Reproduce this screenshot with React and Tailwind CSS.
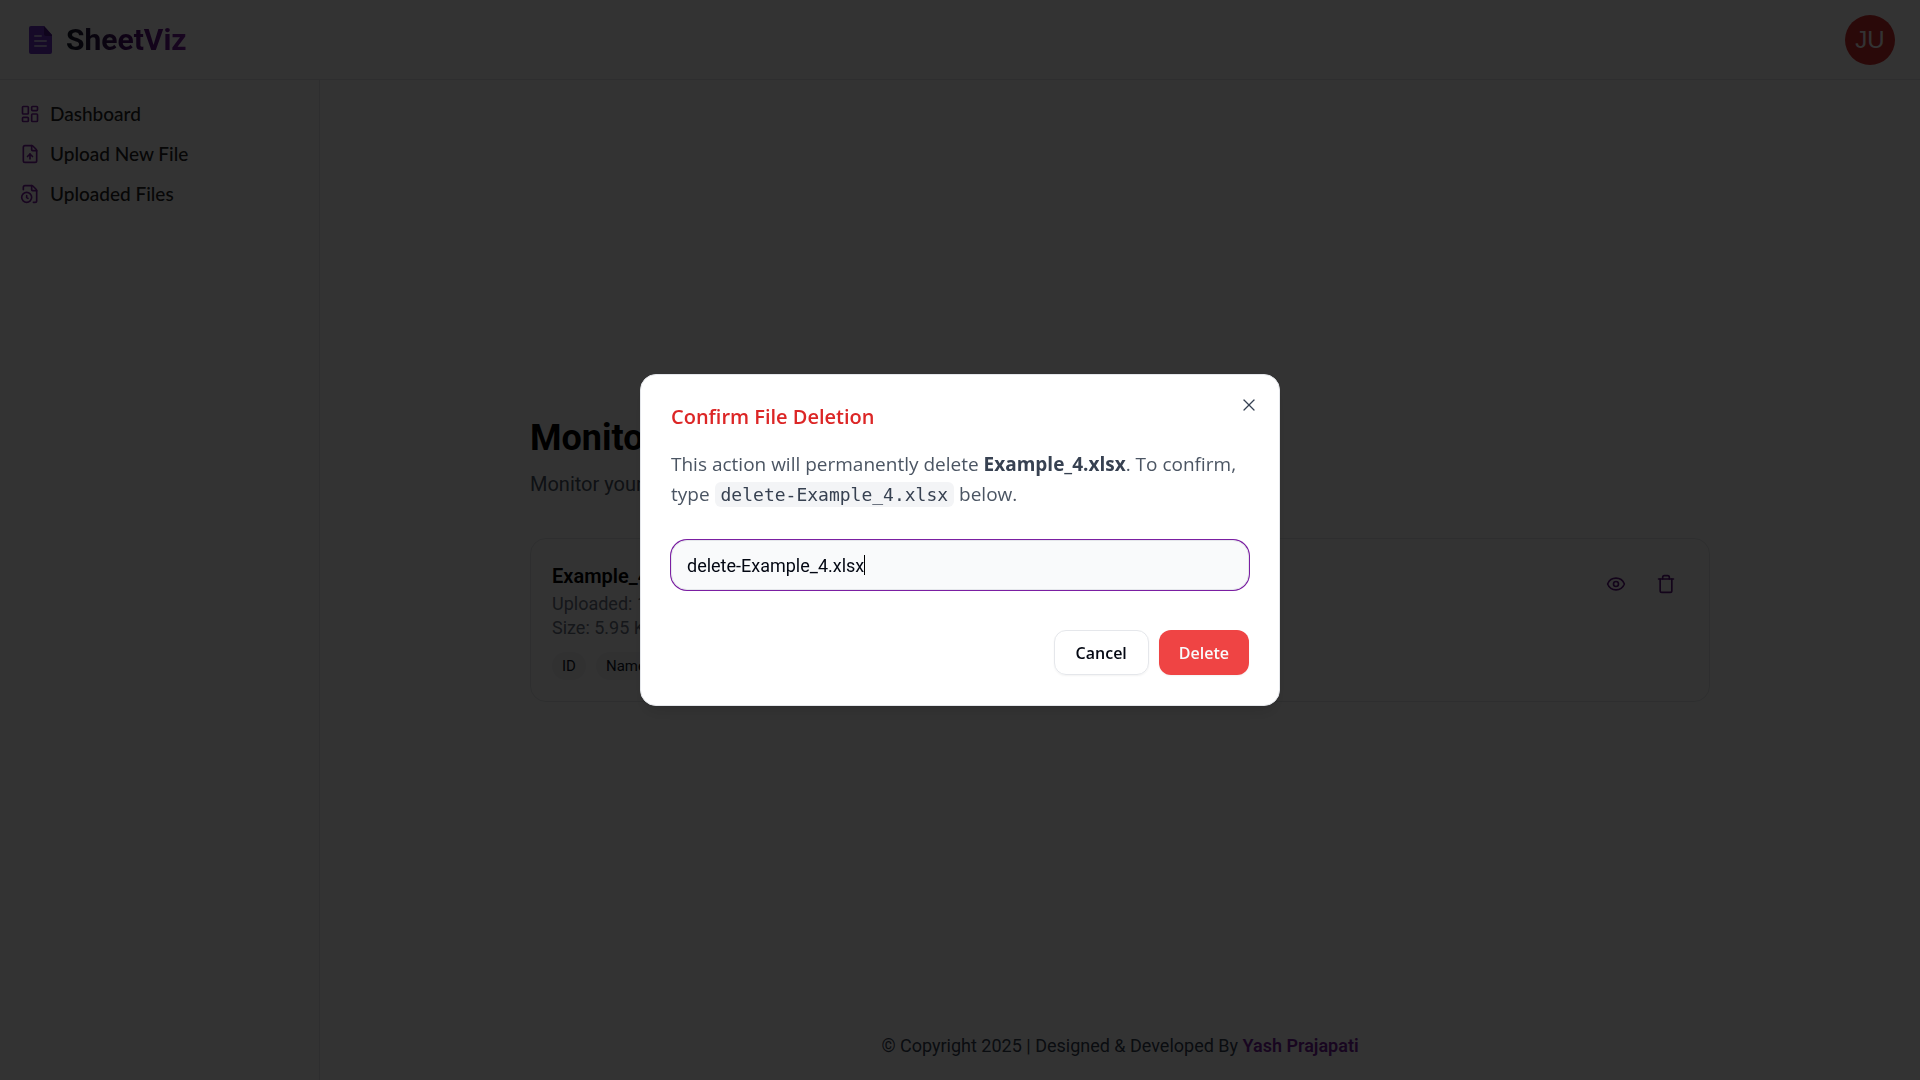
import { useState } from "react";
import { Eye, FileClock, FileUp, LayoutDashboard, Trash, X } from "lucide-react";

const navItems = [
  { label: "Dashboard", Icon: LayoutDashboard },
  { label: "Upload New File", Icon: FileUp },
  { label: "Uploaded Files", Icon: FileClock },
];

function Logo() {
  return (
    <svg viewBox="0 0 24 28" className="h-7 w-6" aria-hidden="true">
      <path d="M3 0H16L24 9V26A2 2 0 0 1 22 28H3A2 2 0 0 1 1 26V2A2 2 0 0 1 3 0Z" fill="#6d35c8" />
      <path d="M16 0L24 9V10H18A2 2 0 0 1 16 8Z" fill="#4a148c" />
      <path d="M7 10h6M7 15h11M7 20h11" stroke="#c4b5e8" strokeWidth="2" strokeLinecap="round" />
    </svg>
  );
}

function Header() {
  return (
    <header className="flex h-20 items-center justify-between border-b border-gray-200 pr-[25px] pl-7">
      <a href="#" className="flex items-center gap-3.5">
        <Logo />
        <span className="bg-linear-to-r from-gray-900 via-[#4a0a6b] to-[#7b1fa2] bg-clip-text text-3xl font-bold text-transparent">
          SheetViz
        </span>
      </a>
      <button className="size-[50px] rounded-full bg-[#d32f2f] font-['Liberation_Sans',sans-serif] text-2xl text-white">
        JU
      </button>
    </header>
  );
}

function Sidebar() {
  return (
    <nav className="w-80 shrink-0 border-r border-gray-200 px-5 pt-3.5 font-['Lato',sans-serif]">
      {navItems.map(({ label, Icon }) => (
        <a key={label} href="#" className="flex h-10 items-center gap-2.5 text-[19px] font-medium text-neutral-800">
          <Icon size={20} className="text-[#7b1fa2]" />
          {label}
        </a>
      ))}
    </nav>
  );
}

function FileCard() {
  return (
    <article className="mt-10 flex items-start justify-between rounded-2xl border border-gray-200 p-[21px]">
      <div>
        <h2 className="text-xl leading-8 font-semibold text-black">Example_4.xlsx</h2>
        <p className="text-lg leading-6 text-gray-500">Uploaded: 1 day ago</p>
        <p className="text-lg leading-6 text-gray-500">Size: 5.95 KB</p>
        <ul className="mt-3 flex gap-2.5 text-[15px] leading-5 text-gray-900">
          <li className="rounded-full bg-gray-100 px-2.5 py-1">ID</li>
          <li className="rounded-full bg-gray-100 px-2.5 py-1">Name</li>
        </ul>
      </div>
      <div className="flex gap-1.5 text-[#5e1480]">
        <button aria-label="View file" className="px-3 py-3.5"><Eye size={20} /></button>
        <button aria-label="Delete file" className="px-3 py-3.5"><Trash size={20} /></button>
      </div>
    </article>
  );
}

function DeleteDialog() {
  const [value, setValue] = useState("delete-Example_4.xlsx");
  return (
    <div className="fixed inset-0 flex items-center justify-center bg-black/80">
      <section
        role="dialog"
        aria-modal="true"
        aria-labelledby="dialog-title"
        className="relative w-full max-w-[640px] rounded-2xl border border-gray-200 bg-white p-[30px] font-['Open_Sans',sans-serif] shadow-lg"
      >
        <button aria-label="Close" className="absolute top-5 right-5 text-gray-700">
          <X size={20} strokeWidth={1.5} />
        </button>
        <h2 id="dialog-title" className="text-xl leading-6 font-semibold text-[#dc2626]">Confirm File Deletion</h2>
        <p className="mt-5 text-[19px] leading-[30px] text-[#4b5563]">
          This action will permanently delete <strong className="text-[#374151]">Example_4.xlsx</strong>. To confirm,
          <br />
          type{" "}
          <code className="rounded-md bg-gray-100 px-1.5 py-0.5 font-['DejaVu_Sans_Mono',monospace] text-lg text-[#374151]">
            delete-Example_4.xlsx
          </code>{" "}
          below.
        </p>
        <div className="relative mt-[31px]">
          <input
            aria-label="Type the confirmation text"
            value={value}
            onChange={(e) => setValue(e.target.value)}
            className="block h-[50px] w-full rounded-2xl border border-gray-200 bg-[#f9fafb] px-[15px] font-['Roboto',sans-serif] text-lg text-gray-950 ring-1 ring-[#7b1fa2] outline-none"
          />
          <span className="absolute top-[15px] left-[193px] h-5 w-px bg-black" aria-hidden="true" />
        </div>
        <div className="mt-10 flex justify-end gap-2.5 text-base font-semibold">
          <button className="h-[45px] rounded-xl border border-gray-200 px-[21px] text-gray-950 shadow-xs">Cancel</button>
          <button className="h-[45px] rounded-xl bg-[#ef4444] px-5 text-gray-50 shadow-xs">Delete</button>
        </div>
      </section>
    </div>
  );
}

export default function App() {
  return (
    <div className="flex min-h-screen flex-col bg-white font-['Roboto',sans-serif]">
      <Header />
      <div className="flex flex-1">
        <Sidebar />
        <div className="flex flex-1 flex-col">
          <main className="mx-auto flex w-full max-w-[1180px] flex-1 flex-col justify-center pt-7">
            <h1 className="text-4xl font-bold text-black">Monitor Files</h1>
            <p className="mt-3 text-xl text-gray-600">Monitor your uploaded files.</p>
            <FileCard />
          </main>
          <footer className="py-5 text-center text-lg text-gray-700">
            © Copyright 2025 | Designed &amp; Developed By{" "}
            <a href="#" className="font-semibold text-[#7b1fa2]">Yash Prajapati</a>
          </footer>
        </div>
      </div>
      <DeleteDialog />
    </div>
  );
}
